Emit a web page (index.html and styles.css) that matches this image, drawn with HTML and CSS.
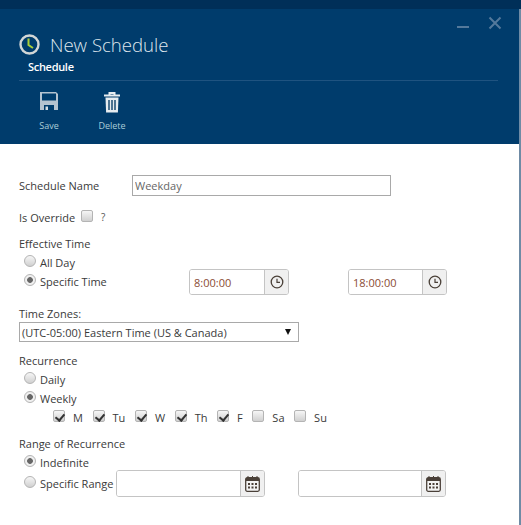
FILE: index.html
```html
<!DOCTYPE html>
<html lang="en">
  <head>
    <meta charset="UTF-8" />
    <title>New Schedule</title>
    <link rel="stylesheet" href="styles.css">
  </head>
  <body>
    <div id="dialog">
      <div id="top-strip"></div>
      <div id="header">
        <div id="win-buttons">
          <span class="win-min"></span>
          <svg width="14" height="14" viewBox="0 0 14 14"><path d="M1.5 1.5l11 11M12.5 1.5l-11 11" stroke="#54799b" stroke-width="2" fill="none"/></svg>
        </div>
        <div id="title-row">
          <svg width="21" height="21" viewBox="0 0 21 21"><circle cx="10.5" cy="10.5" r="9" fill="none" stroke="#d2d6d6" stroke-width="2.4"/><path d="M9.5 4.5v6.5l4.5 3" fill="none" stroke="#a9cf3a" stroke-width="2"/></svg>
          <h1>New Schedule</h1>
        </div>
        <div id="subtitle">Schedule</div>
        <div id="toolbar">
          <div class="tool">
            <svg width="18" height="18" viewBox="0 0 18 18"><path d="M0 0h16l2 2v16H0z" fill="#b4c3d0"/><path d="M2 1.5h14v7H2z" fill="#003c6c"/><path d="M4 13h10v5H4z" fill="#003c6c"/><path d="M5.5 14.5h2.5V18H5.5z" fill="#d5dde3"/></svg>
            <span>Save</span>
          </div>
          <div class="tool">
            <svg width="18" height="22" viewBox="0 0 18 22"><path d="M1 4.5h16M6.5 4V2h5v2" fill="none" stroke="#e6ecf0" stroke-width="2"/><path d="M2.5 6.5h13l-.6 15H3.1z" fill="#e6ecf0"/><path d="M5 9h2v10H5zM8 9h2v10H8zM11 9h2v10h-2z" fill="#4c7391"/></svg>
            <span>Delete</span>
          </div>
        </div>
      </div>

      <div id="form">
        <div class="name-row">
          <label class="name-label">Schedule Name</label>
          <input class="name-input" type="text" value="Weekday" />
        </div>
        <div class="override-row">
          <span>Is Override</span>
          <input type="checkbox" />
          <span class="hint">?</span>
        </div>

        <div class="group effective">
          <div class="group-title">Effective Time</div>
          <div class="option"><input type="radio" name="eff" /><span>All Day</span></div>
          <div class="option specific-time">
            <input type="radio" name="eff" checked /><span>Specific Time</span>
            <div class="picker time-one">
              <input type="text" value="8:00:00" />
              <span class="picker-btn">
                <svg width="14" height="14" viewBox="0 0 14 14"><circle cx="7" cy="7" r="5.8" fill="none" stroke="#4a4038" stroke-width="1.3"/><path d="M7 3.8v3.6h3" fill="none" stroke="#4a4038" stroke-width="1.2"/></svg>
              </span>
            </div>
            <div class="picker time-two">
              <input type="text" value="18:00:00" />
              <span class="picker-btn">
                <svg width="14" height="14" viewBox="0 0 14 14"><circle cx="7" cy="7" r="5.8" fill="none" stroke="#4a4038" stroke-width="1.3"/><path d="M7 3.8v3.6h3" fill="none" stroke="#4a4038" stroke-width="1.2"/></svg>
              </span>
            </div>
          </div>
        </div>

        <div class="group zones">
          <div class="zones-title">Time Zones:</div>
          <div class="zone-select">
            <span>(UTC-05:00) Eastern Time (US &amp; Canada)</span>
            <i class="arrow"></i>
          </div>
        </div>

        <div class="group recurrence">
          <div class="group-title">Recurrence</div>
          <div class="option"><input type="radio" name="rec" /><span>Daily</span></div>
          <div class="option"><input type="radio" name="rec" checked /><span>Weekly</span></div>
          <div class="days">
            <label class="day"><input type="checkbox" checked /><span>M</span></label>
            <label class="day"><input type="checkbox" checked /><span>Tu</span></label>
            <label class="day"><input type="checkbox" checked /><span>W</span></label>
            <label class="day"><input type="checkbox" checked /><span>Th</span></label>
            <label class="day"><input type="checkbox" checked /><span>F</span></label>
            <label class="day"><input type="checkbox" /><span>Sa</span></label>
            <label class="day"><input type="checkbox" /><span>Su</span></label>
          </div>
        </div>

        <div class="group range">
          <div class="group-title">Range of Recurrence</div>
          <div class="option"><input type="radio" name="rng" checked /><span>Indefinite</span></div>
          <div class="option specific-range">
            <input type="radio" name="rng" /><span>Specific Range</span>
            <div class="picker date-one">
              <input type="text" />
              <span class="picker-btn">
                <svg width="15" height="16" viewBox="0 0 15 16"><rect x="0.7" y="1.7" width="13.6" height="13.6" rx="1.5" fill="#f3f3f3" stroke="#4a4038" stroke-width="1.3"/><path d="M1 2h13v3H1z" fill="#4a4038"/><path d="M3 0v2M7.5 0v2M12 0v2" stroke="#4a4038"/><path d="M3 7h2v2H3zM6.5 7h2v2h-2zM10 7h2v2h-2zM3 10.5h2v2H3zM6.5 10.5h2v2h-2zM10 10.5h2v2h-2z" fill="#4a4038"/></svg>
              </span>
            </div>
            <div class="picker date-two">
              <input type="text" />
              <span class="picker-btn">
                <svg width="15" height="16" viewBox="0 0 15 16"><rect x="0.7" y="1.7" width="13.6" height="13.6" rx="1.5" fill="#f3f3f3" stroke="#4a4038" stroke-width="1.3"/><path d="M1 2h13v3H1z" fill="#4a4038"/><path d="M3 0v2M7.5 0v2M12 0v2" stroke="#4a4038"/><path d="M3 7h2v2H3zM6.5 7h2v2h-2zM10 7h2v2h-2zM3 10.5h2v2H3zM6.5 10.5h2v2h-2zM10 10.5h2v2h-2z" fill="#4a4038"/></svg>
              </span>
            </div>
          </div>
        </div>
      </div>
    </div>
  </body>
</html>
```

FILE: styles.css
```css
* {
  margin: 0;
  padding: 0;
  box-sizing: border-box;
}

html,
body {
  width: 521px;
  height: 525px;
  overflow: hidden;
  background: #fff;
}

body {
  font-family: "Open Sans", "Noto Sans", sans-serif;
  font-size: 11px;
  color: #3a3a3a;
}

#dialog {
  height: 525px;
  border-right: 2px solid #6f8ba5;
}

#top-strip {
  height: 9px;
  margin-right: -2px;
  background: #002f58;
}

#header {
  position: relative;
  height: 135px;
  padding: 23px 21px 0 19px;
  background: #003c6c;
}

#win-buttons {
  position: absolute;
  top: 7px;
  right: 17px;
  display: flex;
  align-items: flex-start;
  gap: 19px;
}

.win-min {
  width: 12px;
  height: 2px;
  margin-top: 10px;
  background: #54799b;
}

#title-row {
  display: flex;
  align-items: center;
  gap: 10px;
  height: 24px;
}

#title-row h1 {
  font-size: 18.6px;
  font-weight: 300;
  color: #dfe6ec;
}

#subtitle {
  margin: 3px 0 0 9px;
  height: 15px;
  line-height: 15px;
  font-size: 11px;
  font-weight: 600;
  letter-spacing: -0.3px;
  color: #fff;
}

#toolbar {
  display: flex;
  margin-top: 6px;
  padding: 11px 0 0 15px;
  border-top: 1px solid #1f5380;
  gap: 33px;
}

.tool {
  display: flex;
  flex-direction: column;
  align-items: center;
  width: 30px;
  color: #a9cdd8;
  font-size: 9px;
}

.tool:last-child svg {
  margin-top: -1px;
}

.tool span {
  margin-top: 7px;
  line-height: 12px;
}

.tool:first-child span {
  margin-top: 10px;
}

#form {
  padding: 30px 0 0 19px;
  font-size: 11px;
}

input[type="radio"],
input[type="checkbox"] {
  appearance: none;
  flex: none;
  border: 1px solid #b4b4b4;
  background: linear-gradient(#f6f6f6, #d0d0d0);
}

input[type="radio"] {
  width: 12px;
  height: 12px;
  border-radius: 50%;
}

input[type="radio"]:checked {
  background: radial-gradient(circle, #666 0 2.5px, #f0f0f0 3.2px);
}

input[type="checkbox"] {
  position: relative;
  width: 12px;
  height: 12px;
  border-radius: 2px;
}

input[type="checkbox"]:checked::after {
  content: "";
  position: absolute;
  left: 3px;
  top: 1px;
  width: 4px;
  height: 7px;
  border: solid #333;
  border-width: 0 2px 2px 0;
  transform: rotate(40deg);
}

.name-row {
  display: flex;
  align-items: center;
  height: 22px;
}

.name-label {
  width: 113px;
}

.name-input {
  width: 259px;
  height: 21px;
  padding-left: 2px;
  border: 1px solid #a9a9a9;
  font: inherit;
  color: #666;
}

.override-row {
  display: flex;
  align-items: center;
  height: 16px;
  margin-top: 13px;
}

.override-row input {
  margin: 0 8px 2px 6px;
}

.hint {
  font-size: 10px;
  color: #555;
}

.group-title {
  height: 17px;
  line-height: 16px;
}

.option {
  position: relative;
  display: flex;
  align-items: center;
  height: 19px;
  padding-left: 5px;
}

.option input[type="radio"] {
  margin: 0 4px 3px 0;
}

.effective {
  margin-top: 11px;
}

.picker {
  position: absolute;
  display: flex;
  border: 1px solid #c4c4c4;
  border-radius: 3px;
  overflow: hidden;
}

.picker input {
  flex: 1;
  min-width: 0;
  border: 0;
  padding-left: 4px;
  font: inherit;
  color: #8a4b33;
  outline: 0;
}

.picker-btn {
  display: flex;
  align-items: center;
  justify-content: center;
  width: 24px;
  border-left: 1px solid #c4c4c4;
  background: #f0f0f0;
}

.time-one {
  left: 170px;
  width: 100px;
  top: -3px;
  height: 26px;
}

.time-two {
  left: 329px;
  width: 99px;
  top: -3px;
  height: 26px;
}

.zones {
  margin-top: 15px;
}

.zones-title {
  height: 16px;
  line-height: 15px;
}

.zone-select {
  display: flex;
  align-items: center;
  justify-content: space-between;
  width: 280px;
  height: 20px;
  padding: 0 7px 0 2px;
  border: 1px solid #a9a9a9;
}

.arrow {
  width: 0;
  height: 0;
  border-style: solid;
  border-width: 6px 3.5px 0;
  border-color: #111 transparent transparent;
}

.recurrence {
  margin-top: 11px;
}

.days {
  display: flex;
  padding-left: 34px;
  height: 18px;
  margin-top: -1px;
}

.day {
  display: flex;
  align-items: center;
  margin-right: 9.6px;
}

.day span {
  margin: 3px 0 0 8px;
}

.range {
  margin-top: 11px;
}

.specific-range {
  height: 22px;
}

.date-one {
  left: 97px;
  width: 149px;
  top: -2px;
  height: 27px;
}

.date-two {
  left: 279px;
  width: 148px;
  top: -2px;
  height: 27px;
}
```
